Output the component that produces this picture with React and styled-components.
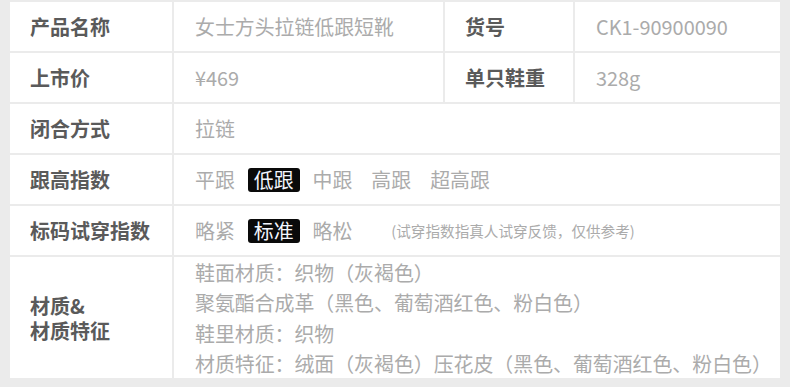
import React from "react";
import styled, { createGlobalStyle } from "styled-components";

const Global = createGlobalStyle`
  html, body { margin: 0; padding: 0; background: #ebebeb; overflow: hidden; }
  body { font-family: "Noto Sans CJK SC", "Noto Sans", sans-serif; }
`;

const Table = styled.div`
  display: grid;
  grid-template-columns: 162px 269px 128px 205px;
  grid-template-rows: 49px 49px 49px 49px 49px 121px;
  gap: 2px;
  padding: 2px 10px 9px;
  width: 790px;
  box-sizing: border-box;
  background: #ebebeb;
`;

const Label = styled.div`
  background: #fff;
  display: flex;
  align-items: center;
  padding-left: 20px;
  font-size: 20px;
  font-weight: 700;
  color: #5a5a5a;
  line-height: 25px;
`;

const LabelLines = styled.div`
  display: flex;
  flex-direction: column;
  line-height: 25px;
`;

const Value = styled.div`
  background: #fff;
  display: flex;
  align-items: center;
  padding-left: ${(p) => (p.$tight ? 15 : 21)}px;
  font-size: 19.9px;
  color: #ababab;
  grid-column: ${(p) => (p.$span ? `span ${p.$span}` : "auto")};
  gap: ${(p) => (p.$tight ? 7 : 0)}px;
`;

const Option = styled.span`
  display: inline-block;
  padding: 0 6px;
  height: 24px;
  line-height: 24px;
  border-radius: 3px;
  background: ${(p) => (p.$active ? "#0a0a0a" : "transparent")};
  color: ${(p) => (p.$active ? "#f4f7ff" : "#ababab")};
`;

const Note = styled.span`
  margin-left: 26px;
  font-size: 14.6px;
  color: #ababab;
`;

const Lines = styled.div`
  display: flex;
  flex-direction: column;
  line-height: 30.5px;
  padding-top: 2px;
`;

const heel = ["平跟", "低跟", "中跟", "高跟", "超高跟"];
const fit = ["略紧", "标准", "略松"];

export default function App() {
  return (
    <>
      <Global />
      <Table>
        <Label>产品名称</Label>
        <Value>女士方头拉链低跟短靴</Value>
        <Label>货号</Label>
        <Value>CK1-90900090</Value>

        <Label>上市价</Label>
        <Value>¥469</Value>
        <Label>单只鞋重</Label>
        <Value>328g</Value>

        <Label>闭合方式</Label>
        <Value $span={3}>拉链</Value>

        <Label>跟高指数</Label>
        <Value $span={3} $tight>
          {heel.map((h) => (
            <Option key={h} $active={h === "低跟"}>{h}</Option>
          ))}
        </Value>

        <Label>标码试穿指数</Label>
        <Value $span={3} $tight>
          {fit.map((h) => (
            <Option key={h} $active={h === "标准"}>{h}</Option>
          ))}
          <Note>(试穿指数指真人试穿反馈，仅供参考)</Note>
        </Value>

        <Label>
          <LabelLines>
            <span>材质&amp;</span>
            <span>材质特征</span>
          </LabelLines>
        </Label>
        <Value $span={3}>
          <Lines>
            <span>鞋面材质：织物（灰褐色）</span>
            <span>聚氨酯合成革（黑色、葡萄酒红色、粉白色）</span>
            <span>鞋里材质：织物</span>
            <span>材质特征：绒面（灰褐色）压花皮（黑色、葡萄酒红色、粉白色）</span>
          </Lines>
        </Value>
      </Table>
    </>
  );
}
